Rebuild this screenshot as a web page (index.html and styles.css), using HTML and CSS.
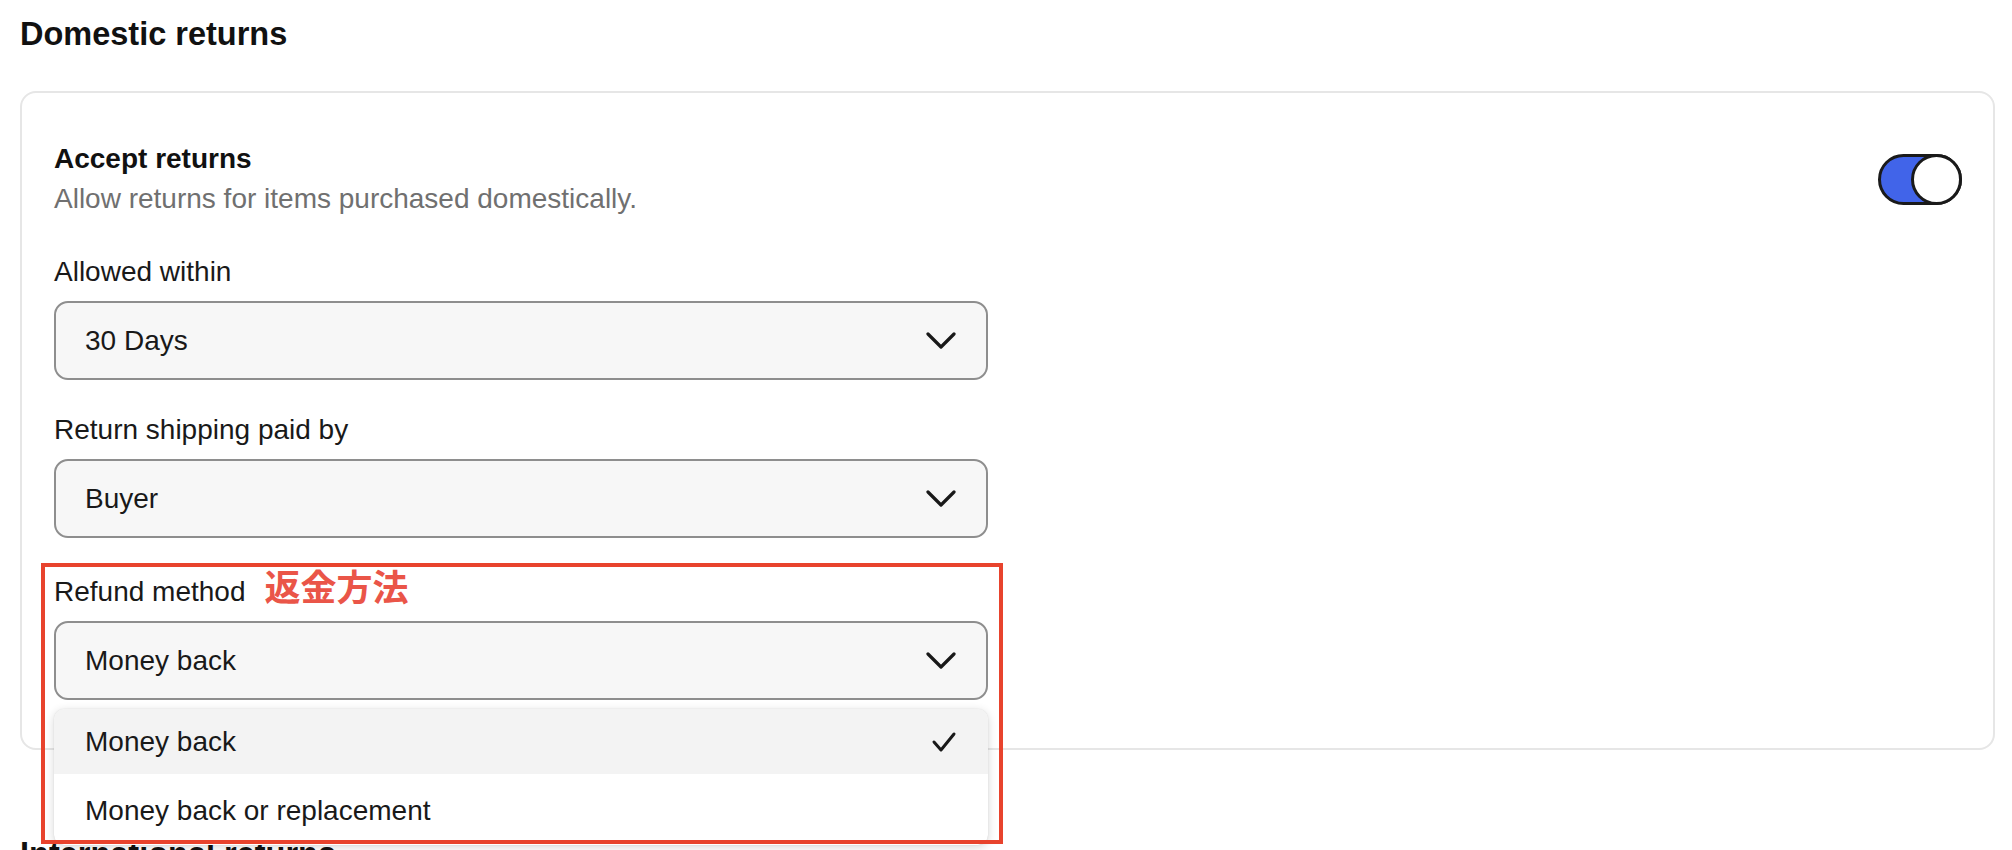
FILE: index.html
```html
<!DOCTYPE html>
<html lang="en">
<head>
<meta charset="utf-8">
<title>Return policy</title>
<link rel="stylesheet" href="styles.css">
</head>
<body>
<main class="page">
  <section class="section">
    <h2 class="section-title">Domestic returns</h2>
    <div class="card">
      <div class="card-head">
        <div class="head-text">
          <h3 class="head-title">Accept returns</h3>
          <p class="head-sub">Allow returns for items purchased domestically.</p>
        </div>
        <span class="toggle" role="switch" aria-checked="true"><span class="knob"></span></span>
      </div>

      <div class="fields">
        <div class="field">
          <div class="field-label">Allowed within</div>
          <div class="select">
            <span class="select-value">30 Days</span>
            <svg class="chevron" width="30" height="18" viewBox="0 0 30 18"><polyline points="2,2 15,15 28,2" fill="none" stroke="#191919" stroke-width="3.2" stroke-linecap="round" stroke-linejoin="round"/></svg>
          </div>
        </div>

        <div class="field">
          <div class="field-label">Return shipping paid by</div>
          <div class="select">
            <span class="select-value">Buyer</span>
            <svg class="chevron" width="30" height="18" viewBox="0 0 30 18"><polyline points="2,2 15,15 28,2" fill="none" stroke="#191919" stroke-width="3.2" stroke-linecap="round" stroke-linejoin="round"/></svg>
          </div>
        </div>

        <div class="field field-open">
          <div class="field-label field-label-row">
            <span>Refund method</span>
            <span class="note">返金方法</span>
          </div>
          <div class="select-wrap">
            <div class="select">
              <span class="select-value">Money back</span>
              <svg class="chevron" width="30" height="18" viewBox="0 0 30 18"><polyline points="2,2 15,15 28,2" fill="none" stroke="#191919" stroke-width="3.2" stroke-linecap="round" stroke-linejoin="round"/></svg>
            </div>
            <ul class="menu">
              <li class="menu-option is-selected">
                <span>Money back</span>
                <svg class="check" width="26" height="22" viewBox="0 0 26 22"><polyline points="3,11 10,19 23,3" fill="none" stroke="#191919" stroke-width="3" stroke-linecap="round" stroke-linejoin="round"/></svg>
              </li>
              <li class="menu-option">
                <span>Money back or replacement</span>
              </li>
            </ul>
          </div>
          <div class="annotation-box"></div>
        </div>
      </div>
    </div>
  </section>

  <section class="section">
    <h2 class="section-title">International returns</h2>
  </section>
</main>
</body>
</html>
```

FILE: styles.css
```css
* {
  box-sizing: border-box;
}

html, body {
  margin: 0;
  background: #ffffff;
}

body {
  font-family: "Liberation Sans", Arial, sans-serif;
  color: #191919;
  overflow: hidden;
  height: 850px;
}

.page {
  padding: 0 17px 0 20px;
}

.section + .section {
  margin-top: 84px;
}

.section-title {
  margin: 14px 0 0;
  font-size: 32.5px;
  line-height: 40px;
  font-weight: 700;
  color: #111111;
}

.card {
  margin-top: 37px;
  border: 2px solid #e6e6e6;
  border-radius: 16px;
  padding: 49px 31px 48px 32px;
  background: #ffffff;
}

.card-head {
  display: flex;
  align-items: center;
  justify-content: space-between;
}

.head-title {
  margin: 0;
  font-size: 28px;
  line-height: 34px;
  font-weight: 700;
  color: #111111;
}

.head-sub {
  margin: 6px 0 0;
  font-size: 28px;
  line-height: 34px;
  color: #707070;
}

.toggle {
  display: flex;
  justify-content: flex-end;
  width: 84px;
  height: 51px;
  border: 3px solid #1a1a1a;
  border-radius: 26px;
  background: #4164e9;
}

.knob {
  width: 51px;
  height: 51px;
  margin: -3px;
  border: 3px solid #1a1a1a;
  border-radius: 50%;
  background: #ffffff;
}

.fields {
  display: flex;
  flex-direction: column;
  gap: 33px;
  margin-top: 39px;
}

.field {
  width: 934px;
}

.field-label {
  font-size: 28px;
  line-height: 34px;
  margin-bottom: 12px;
}

.field-label-row {
  display: flex;
  align-items: baseline;
}

.note {
  margin-left: 19px;
  font-family: "Noto Sans CJK JP", "Noto Sans CJK SC", sans-serif;
  font-size: 36px;
  line-height: 28px;
  font-weight: 700;
  color: #ea5548;
}

.select {
  display: flex;
  align-items: center;
  justify-content: space-between;
  height: 79px;
  padding: 0 30px 0 29px;
  border: 2px solid #8e8e8e;
  border-radius: 14px;
  background: #f7f7f7;
  font-size: 28px;
}

.chevron {
  display: block;
}

.field-open {
  position: relative;
}

.select-wrap {
  position: relative;
}

.menu {
  position: absolute;
  top: calc(100% + 9px);
  left: 0;
  right: 0;
  z-index: 2;
  margin: 0;
  padding: 0 0 2px;
  list-style: none;
  display: flex;
  flex-direction: column;
  gap: 4px;
  background: #ffffff;
  border-radius: 10px;
  overflow: hidden;
  box-shadow: 0 2px 10px rgba(0, 0, 0, 0.16), 0 0 1px rgba(0, 0, 0, 0.2);
}

.menu-option {
  display: flex;
  align-items: center;
  justify-content: space-between;
  height: 65px;
  padding: 0 31px 0 31px;
  font-size: 28px;
}

.menu-option.is-selected {
  background: #f3f3f3;
}

.check {
  display: block;
}

.annotation-box {
  position: absolute;
  top: -8px;
  left: -13px;
  right: -15px;
  height: 281px;
  border: 4px solid #e8432d;
  z-index: 3;
  pointer-events: none;
}
```
